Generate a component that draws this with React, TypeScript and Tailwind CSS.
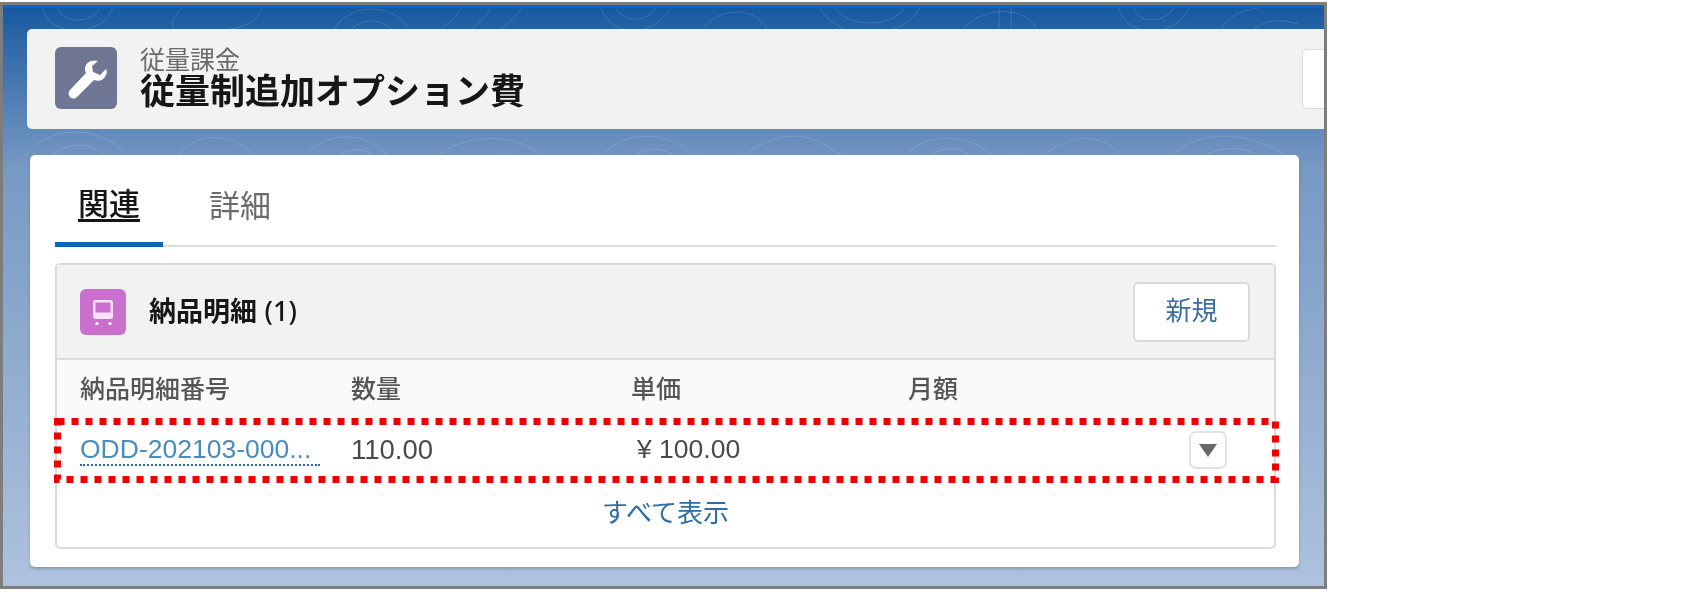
const sans = "font-['Liberation_Sans','Noto_Sans_CJK_JP',sans-serif]";

function Contours({ className }: { className: string }) {
  return (
    <svg className={className} viewBox="0 0 1326 160" preserveAspectRatio="none" fill="none" stroke="#ffffff" strokeOpacity="0.14" strokeWidth="1">
      <path d="M40 0c5 30 60 30 70 0M55 0c5 16 35 16 42 0M180 0c-20 20-10 30 30 24s40-8 50-24M330 28c10-36 70-36 80 0M345 28c10-20 40-20 50 0M460 0c-10 16-20 20-30 28M490 0c-10 16-20 20-30 28M520 0c-10 16-20 20-30 28M600 0c10 28 50 32 70 0M615 0c8 14 30 16 40 0M700 28c10-30 60-34 70 0M820 0c20 34 80 34 100 0M835 0c14 20 56 20 70 0M960 26c20-30 70-30 80 0M1000 0v28M1012 0v28M1120 0c5 30 60 30 70 0M1135 0c5 16 30 16 40 0M1220 28c10-34 60-30 80-28M1250 28c10-16 30-18 50-12" />
      <path d="M20 150c30-40 90-30 110 5M45 152c20-22 50-18 65 3M170 155c20-34 60-34 90 0M300 150c30-34 80-24 90 8M330 152c20-16 40-12 50 4M430 152c40-34 100-24 120 5M600 150c20-30 80-30 100 8M630 152c14-16 40-14 50 4M740 150c40-30 70-30 110 5M900 155c20-36 80-30 100 0M925 155c14-20 40-18 55 0M1040 150c40-30 70-24 90 8M1170 150c30-30 80-30 130 5M1200 152c20-16 50-16 70 2" />
      <path d="M1305 160c10 20 0 40 10 70s-6 50 4 80M1316 160c8 30-4 60 4 90M8 160c6 30-2 50 6 80s-4 40 6 70" />
    </svg>
  );
}

function WrenchIcon() {
  return (
    <svg viewBox="0 0 60 62" className="size-full">
      <path d="M42 14c-6-2-12 1-13 7 0 2 0 4 1 5L14 43c-2 2-2 5 0 7s5 2 7 0l17-17c5 2 10 0 12-5 1-2 1-4 0-6l-6 6-7-3-1-6 6-5z" fill="#ffffff" />
    </svg>
  );
}

function TrainIcon() {
  return (
    <svg viewBox="0 0 46 46" className="size-full">
      <rect x="13" y="11" width="20" height="19" rx="2.5" fill="#f7e3f7" />
      <rect x="15.5" y="13.5" width="15" height="10" fill="#cb6fcf" />
      <circle cx="17" cy="34.5" r="1.6" fill="#ffffff" />
      <circle cx="30" cy="34.5" r="1.6" fill="#ffffff" />
    </svg>
  );
}

export default function App() {
  return (
    <div className={`h-[596px] w-[1689px] bg-white pt-[2px] ${sans}`}>
      <div className="relative h-[587px] w-[1327px] overflow-hidden border-[3px] border-[#7d7d7d] bg-gradient-to-b from-[#13589f] via-[#7799c4] via-28% to-[#aec2dd] pl-[24px] pt-[24px] blur-[0.4px]">
        <Contours className="absolute left-0 top-[3px] h-[160px] w-full" />
        <div className="absolute left-0 top-0 h-[3px] w-full bg-[#0b66c4]" />

        <div className="relative flex h-[100px] items-center rounded-l-[5px] bg-[#f3f2f2] pl-[28px]">
          <div className="-mt-[3px] size-[62px] shrink-0 rounded-[6px] bg-[#6f7693]">
            <WrenchIcon />
          </div>
          <div className="ml-[23px] flex flex-col">
            <span className="text-[25px] leading-[26px] text-[#6b6b6b]">従量課金</span>
            <span className="text-[35px] leading-[38px] font-bold text-[#161616]">従量制追加オプション費</span>
          </div>
          <div className="ml-auto h-[60px] w-[22px] rounded-l-[5px] border border-r-0 border-[#dddbda] bg-white" />
        </div>

        <div className="relative ml-[3px] mt-[26px] h-[412px] w-[1269px] rounded-[5px] bg-white pl-[25px] pr-[23px] shadow-[0_2px_3px_rgba(60,80,110,0.35)]">
          <div className="flex h-[92px] items-stretch border-b-2 border-[#dddbda]">
            <div className="-mb-[2px] flex w-[108px] items-center justify-center border-b-[5px] border-[#0b66b8] pt-[14px] text-[31px] font-medium text-[#161616] underline underline-offset-4">関連</div>
            <div className="flex w-[154px] items-center justify-center pt-[14px] text-[31px] text-[#6b6b6b]">詳細</div>
          </div>

          <div className="mt-[16px] h-[286px] rounded-[5px] border-2 border-[#dddbda]">
            <div className="flex h-[95px] items-center border-b-2 border-[#dddbda] bg-[#f3f2f2] pl-[23px] pr-[24px]">
              <div className="size-[46px] rounded-[6px] bg-[#cb6fcf]">
                <TrainIcon />
              </div>
              <span className="ml-[23px] text-[27px] font-bold text-[#161616]">納品明細 <span className="font-['Noto_Sans'] text-[27px] font-medium">(1)</span></span>
              <div className="ml-auto flex h-[60px] w-[117px] items-center justify-center rounded-[5px] border-2 border-[#dddbda] bg-white text-[26px] text-[#3d6d9e]">新規</div>
            </div>

            <div className="relative">
              <div className="flex h-[59px] items-center bg-[#fafaf9] pl-[23px] text-[25px] font-medium text-[#555555]">
                <span className="w-[271px]">納品明細番号</span>
                <span className="w-[280px]">数量</span>
                <span className="w-[277px]">単価</span>
                <span>月額</span>
              </div>
              <div className="flex h-[61px] items-center pl-[23px] text-[#4a4a4a]">
                <span className="w-[271px]">
                  <span className="inline-block w-[240px] whitespace-nowrap border-b-2 border-dotted border-[#2b6a9f] text-[26.5px] leading-[30px] text-[#4a8dbd]">ODD-202103-000...</span>
                </span>
                <span className="w-[286px] text-[27.5px]">110.00</span>
                <span className="text-[26.5px]">¥ 100.00</span>
                <div className="ml-auto mr-[47px] flex size-[38px] items-center justify-center rounded-[7px] border-2 border-[#e4e3e2] bg-white">
                  <svg viewBox="0 0 20 16" className="w-[20px]"><path d="M1 2h18l-9 13z" fill="#6a6a6a" /></svg>
                </div>
              </div>
              <div className="flex h-[62px] items-center justify-center pt-[4px] text-[26px] text-[#2f6ea5]">すべて表示</div>

              <svg className="absolute -left-[3px] top-[58px] h-[65px] w-[1226px]" fill="none">
                <rect x="3.5" y="3.5" width="1218" height="58" stroke="#f00000" strokeWidth="7" strokeDasharray="7 7" />
              </svg>
            </div>
          </div>
        </div>
      </div>
    </div>
  );
}
